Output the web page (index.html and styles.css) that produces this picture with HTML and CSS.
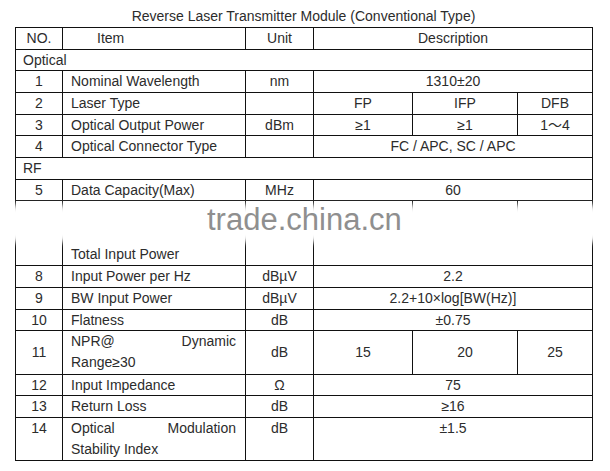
FILE: index.html
```html
<!DOCTYPE html>
<html>
<head>
<meta charset="utf-8">
<title>Reverse Laser Transmitter Module</title>
<link rel="stylesheet" href="styles.css">
</head>
<body>
<div class="page">
  <div class="title">Reverse Laser Transmitter Module (Conventional Type)</div>
  <table class="spec">
    <colgroup>
      <col class="c-no"><col class="c-item"><col class="c-unit"><col class="c-d1"><col class="c-d2"><col class="c-d3">
    </colgroup>
    <tbody>
      <tr><td class="ctr">NO.</td><td class="item-head">Item</td><td class="ctr">Unit</td><td class="ctr" colspan="3">Description</td></tr>
      <tr><td class="section" colspan="6">Optical</td></tr>
      <tr><td class="ctr">1</td><td class="item">Nominal Wavelength</td><td class="ctr">nm</td><td class="ctr" colspan="3">1310±20</td></tr>
      <tr><td class="ctr">2</td><td class="item">Laser Type</td><td class="ctr"></td><td class="ctr">FP</td><td class="ctr">IFP</td><td class="ctr">DFB</td></tr>
      <tr><td class="ctr">3</td><td class="item">Optical Output Power</td><td class="ctr">dBm</td><td class="ctr">≥1</td><td class="ctr">≥1</td><td class="ctr">1～4</td></tr>
      <tr><td class="ctr">4</td><td class="item">Optical Connector Type</td><td class="ctr"></td><td class="ctr" colspan="3">FC / APC, SC / APC</td></tr>
      <tr><td class="section" colspan="6">RF</td></tr>
      <tr><td class="ctr">5</td><td class="item">Data Capacity(Max)</td><td class="ctr">MHz</td><td class="ctr" colspan="3">60</td></tr>
      <tr><td class="ctr">&nbsp;</td><td class="item">&nbsp;</td><td class="ctr"></td><td class="ctr"></td><td class="ctr"></td><td class="ctr"></td></tr>
      <tr class="tall top"><td class="ctr">&nbsp;</td><td class="item">&nbsp;<br>Total Input Power</td><td class="ctr"></td><td class="ctr" colspan="3"></td></tr>
      <tr><td class="ctr">8</td><td class="item">Input Power per Hz</td><td class="ctr">dBµV</td><td class="ctr" colspan="3">2.2</td></tr>
      <tr><td class="ctr">9</td><td class="item">BW Input Power</td><td class="ctr">dBµV</td><td class="ctr" colspan="3">2.2+10×log[BW(Hz)]</td></tr>
      <tr><td class="ctr">10</td><td class="item">Flatness</td><td class="ctr">dB</td><td class="ctr" colspan="3">±0.75</td></tr>
      <tr class="tall"><td class="ctr">11</td><td class="item just">NPR@ Dynamic Range≥30</td><td class="ctr">dB</td><td class="ctr">15</td><td class="ctr">20</td><td class="ctr">25</td></tr>
      <tr><td class="ctr">12</td><td class="item">Input Impedance</td><td class="ctr">Ω</td><td class="ctr" colspan="3">75</td></tr>
      <tr><td class="ctr">13</td><td class="item">Return Loss</td><td class="ctr">dB</td><td class="ctr" colspan="3">≥16</td></tr>
      <tr class="tall top"><td class="ctr">14</td><td class="item just">Optical Modulation Stability Index</td><td class="ctr">dB</td><td class="ctr" colspan="3">±1.5</td></tr>
    </tbody>
  </table>
  <div class="wm-glow"></div>
  <div class="wm">trade.china.cn</div>
</div>
</body>
</html>
```

FILE: styles.css
```css
html, body {
  margin: 0;
  padding: 0;
  background: #fff;
}
.page {
  position: relative;
  width: 610px;
  height: 471px;
  font-family: "Liberation Sans", Arial, "Noto Sans CJK SC", sans-serif;
  font-size: 14px;
  color: #2c2c2c;
  padding-left: 15px;
  box-sizing: border-box;
}
.title {
  width: 577px;
  text-align: center;
  padding-top: 5px;
  line-height: 22px;
  height: 22px;
}
.spec {
  border-collapse: collapse;
  table-layout: fixed;
  width: 577px;
}
.c-no { width: 47px; }
.c-item { width: 183px; }
.c-unit { width: 68px; }
.c-d1 { width: 99px; }
.c-d2 { width: 105px; }
.c-d3 { width: 75px; }
.spec td {
  border: 1px solid #111;
  padding: 0;
  line-height: 20.65px;
  vertical-align: middle;
  white-space: nowrap;
}
.spec tr.tall td {
  line-height: 21.15px;
}
.spec tr.top td {
  vertical-align: top;
}
.ctr { text-align: center; }
.item-head { padding-left: 34px !important; }
.item { padding: 0 9px 0 8px !important; }
.item.just {
  white-space: normal;
  text-align: justify;
}
.section { padding-left: 7px !important; }
.wm-glow {
  position: absolute;
  left: 0;
  top: 205px;
  width: 610px;
  height: 37px;
  background: #fff;
  filter: blur(3px);
}
.wm {
  position: absolute;
  left: 207px;
  top: 202px;
  font-size: 31px;
  line-height: 36px;
  color: #8f8f8f;
}
```
